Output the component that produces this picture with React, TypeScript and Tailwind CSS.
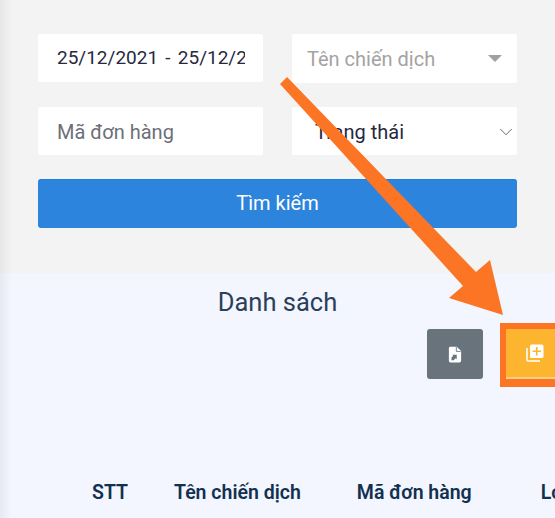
import { ChevronDown } from 'lucide-react';

function Arrow() {
  return (
    <svg className="absolute left-0 top-0 pointer-events-none" width="555" height="518" viewBox="0 0 555 518">
      <path
        d="M280 84 L287 77 L476 272 L490 260 L503 315 L449 298 L463 286 Z"
        fill="#fb7524"
      />
    </svg>
  );
}

export default function App() {
  return (
    <div className="relative w-[555px] h-[518px] overflow-hidden bg-[#f3f3f3] font-['Roboto',sans-serif]">
      {/* Filters */}
      <div className="h-[273px] pl-[38px] pr-[38px] pt-[34px]">
        <div className="grid grid-cols-[225px_225px] gap-x-[29px] gap-y-[24px]">
          <div className="h-[48px] bg-white rounded-[2px] pl-[19px] pr-[18px] flex items-center overflow-hidden">
            <span className="block overflow-hidden whitespace-nowrap text-[19px] [word-spacing:2.5px] text-[#27293f]">
              25/12/2021 - 25/12/2021
            </span>
          </div>
          <div className="h-[49px] bg-white rounded-[2px] pl-[15px] pr-[15px] flex items-center justify-between">
            <span className="text-[20px] text-[#a3a3a3]">Tên chiến dịch</span>
            <span className="w-0 h-0 border-x-[7px] border-x-transparent border-t-[7px] border-t-[#a0a0a0]" />
          </div>
          <div className="h-[48px] bg-white rounded-[2px] pl-[19px] pt-[2px] flex items-center">
            <span className="text-[20px] text-[#6c6f78]">Mã đơn hàng</span>
          </div>
          <div className="h-[48px] bg-white rounded-[2px] pl-[23px] pt-[2px] flex items-center justify-between">
            <span className="text-[20px] text-[#27293f]">Trạng thái</span>
            <ChevronDown size={22} strokeWidth={0.8} className="text-[#333]" />
          </div>
        </div>
        <button className="mt-[24px] w-[479px] h-[49px] pb-[2px] bg-[#2d84dd] border-t border-[#1f7fd6] rounded-[3px] text-[20px] text-white text-center">
          Tìm kiếm
        </button>
      </div>

      {/* List */}
      <div className="h-[245px] bg-[#f3f6fe]">
        <h2 className="pt-[13px] text-center text-[25.5px] leading-[32px] font-[450] text-[#2a3f5a]">Danh sách</h2>
        <div className="mt-[11px] pl-[427px] flex">
          <button className="shrink-0 w-[56px] h-[50px] bg-[#68737c] rounded-[3px] flex items-center justify-center">
            <svg width="14" height="17" viewBox="0 0 16 18">
              <path d="M2 0 H10 L15 5 V16 A2 2 0 0 1 13 18 H3 A2 2 0 0 1 1 16 V2 A2 2 0 0 1 2 0 Z" fill="#fff" />
              <path d="M9.5 0.5 V5.5 H14.5" fill="none" stroke="#68737c" strokeWidth="1" />
              <path d="M4 15.5 L4 12.5 L6 10.5 L4.8 9.3 H10 V14.5 L8.6 13.2 L6.5 15.5 Z" fill="#68737c" />
            </svg>
          </button>
          <div className="ml-[17px] mt-[-6px] w-[70px] h-[64px] shrink-0 bg-[#fb7524] pl-[6px] pt-[6px] pr-[6px] pb-[2px]">
            <div className="w-[58px] h-[50px] bg-[#fdb52f] border-b-2 border-[#fbcf85] flex items-center justify-center">
              <svg width="18" height="18" viewBox="0 0 18 18">
                <path d="M1 4 V15.5 A1.5 1.5 0 0 0 2.5 17 H14" fill="none" stroke="#fff" strokeWidth="1.6" />
                <rect x="4" y="0.5" width="13.5" height="13.5" rx="1.5" fill="#fff" />
                <path d="M10.75 3 V11.5 M6.5 7.25 H15" stroke="#fdb52f" strokeWidth="1.6" />
              </svg>
            </div>
          </div>
        </div>
        <div className="mt-[94px] pl-[92px] flex whitespace-nowrap text-[19.5px] leading-[24px] font-semibold text-[#12304f]">
          <span>STT</span>
          <span className="ml-[46px]">Tên chiến dịch</span>
          <span className="ml-[56px]">Mã đơn hàng</span>
          <span className="ml-[69px]">Loại</span>
        </div>
      </div>

      {/* soft shadow down the left edge */}
      <div className="absolute left-0 top-0 w-[12px] h-full bg-gradient-to-r from-black/5 to-transparent" />
      <Arrow />
    </div>
  );
}
